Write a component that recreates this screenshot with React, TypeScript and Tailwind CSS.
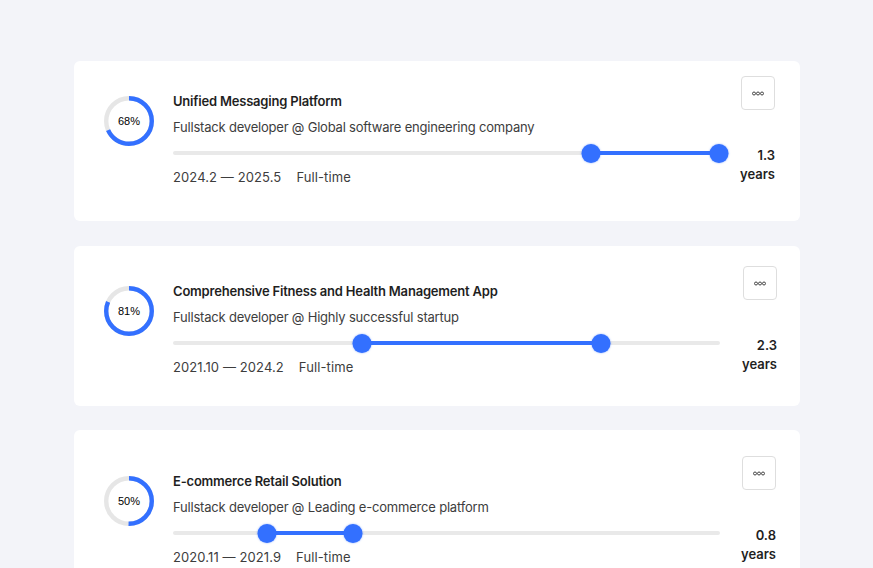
import React from "react";

type Item = {
  pct: number;
  title: string;
  sub: string;
  dates: string;
  type: string;
  from: number;
  to: number;
  years: string;
  pt: string;
  pr: string;
  mt: string;
};

const items: Item[] = [
  {
    pct: 68,
    title: "Unified Messaging Platform",
    sub: "Fullstack developer @ Global software engineering company",
    dates: "2024.2 — 2025.5",
    type: "Full-time",
    from: 76.4,
    to: 99.8,
    years: "1.3",
    pt: "pt-[15px]",
    pr: "pr-[25px]",
    mt: "mt-0",
  },
  {
    pct: 81,
    title: "Comprehensive Fitness and Health Management App",
    sub: "Fullstack developer @ Highly successful startup",
    dates: "2021.10 — 2024.2",
    type: "Full-time",
    from: 34.6,
    to: 78.2,
    years: "2.3",
    pt: "pt-[20px]",
    pr: "pr-[23px]",
    mt: "mt-[25px]",
  },
  {
    pct: 50,
    title: "E-commerce Retail Solution",
    sub: "Fullstack developer @ Leading e-commerce platform",
    dates: "2020.11 — 2021.9",
    type: "Full-time",
    from: 17.2,
    to: 32.9,
    years: "0.8",
    pt: "pt-[26px]",
    pr: "pr-[24px]",
    mt: "mt-[24px]",
  },
];

function Ring({ pct }: { pct: number }) {
  const r = 22.8;
  const c = 2 * Math.PI * r;
  return (
    <div className="relative w-[50px] h-[50px] shrink-0">
      <svg width="50" height="50" viewBox="0 0 50 50" className="-rotate-90">
        <circle cx="25" cy="25" r={r} fill="none" stroke="#e6e6e6" strokeWidth="4.4" />
        <circle
          cx="25"
          cy="25"
          r={r}
          fill="none"
          stroke="#3370ff"
          strokeWidth="4.4"
          strokeDasharray={`${(c * pct) / 100} ${c}`}
        />
      </svg>
      <div className="absolute inset-0 flex items-center justify-center text-[11px] text-black font-['Liberation_Sans',Arial,sans-serif]">
        {pct}%
      </div>
    </div>
  );
}

function Dots() {
  return (
    <svg width="12" height="5" viewBox="0 0 12 5">
      <circle cx="2" cy="2.5" r="1.5" fill="none" stroke="#444" strokeWidth="1" />
      <circle cx="6" cy="2.5" r="1.5" fill="none" stroke="#444" strokeWidth="1" />
      <circle cx="10" cy="2.5" r="1.5" fill="none" stroke="#444" strokeWidth="1" />
    </svg>
  );
}

function Card({ it }: { it: Item }) {
  return (
    <div className={`flex h-[160px] bg-white rounded-[6px] pl-[30px] ${it.pt} ${it.pr} ${it.mt}`}>
      <div className="flex items-start gap-[19px] mt-[15px]">
        <div className="mt-[5px]">
          <Ring pct={it.pct} />
        </div>
        <div className="w-[547px] flex flex-col">
          <div className="text-[13px] leading-[20px] font-semibold tracking-[-0.2px] text-[#1f1f1f]">{it.title}</div>
          <div className="mt-[6px] text-[13px] leading-[20px] tracking-[-0.2px] text-[#3d3d3d]">{it.sub}</div>
          <div className="mt-[6px] relative h-[20px] flex items-center">
            <div className="w-full h-[4px] rounded-full bg-[#e9e9e9]" />
            <div
              className="absolute h-[4px] bg-[#3370ff] top-[8px]"
              style={{ left: `${it.from}%`, width: `${it.to - it.from}%` }}
            />
            <div
              className="absolute top-[0.5px] w-[19px] h-[19px] rounded-full bg-[#3370ff] -translate-x-1/2 shadow-[0_0_2px_rgba(51,112,255,0.6)]"
              style={{ left: `${it.from}%` }}
            />
            <div
              className="absolute top-[0.5px] w-[19px] h-[19px] rounded-full bg-[#3370ff] -translate-x-1/2 shadow-[0_0_2px_rgba(51,112,255,0.6)]"
              style={{ left: `${it.to}%` }}
            />
          </div>
          <div className="mt-[4px] flex gap-[15px] text-[13px] leading-[20px] tracking-[0.1px] text-[#3d3d3d]">
            <span>{it.dates}</span>
            <span>{it.type}</span>
          </div>
        </div>
      </div>
      <div className="flex-1 flex flex-col items-end">
        <button className="w-[34px] h-[34px] flex items-center justify-center bg-white border border-[#dedede] rounded-[4px]">
          <Dots />
        </button>
        <div className="mt-[36px] text-right text-[13px] leading-[19px] font-semibold text-[#1f1f1f]">
          <div>{it.years}</div>
          <div>years</div>
        </div>
      </div>
    </div>
  );
}

export default function App() {
  return (
    <div className="w-[873px] h-[568px] overflow-hidden bg-[#f3f4f9] pt-[61px] font-['Inter','Noto_Sans',sans-serif]">
      <div className="w-[726px] ml-[74px] flex flex-col">
        {items.map((it) => (
          <Card key={it.title} it={it} />
        ))}
      </div>
    </div>
  );
}
